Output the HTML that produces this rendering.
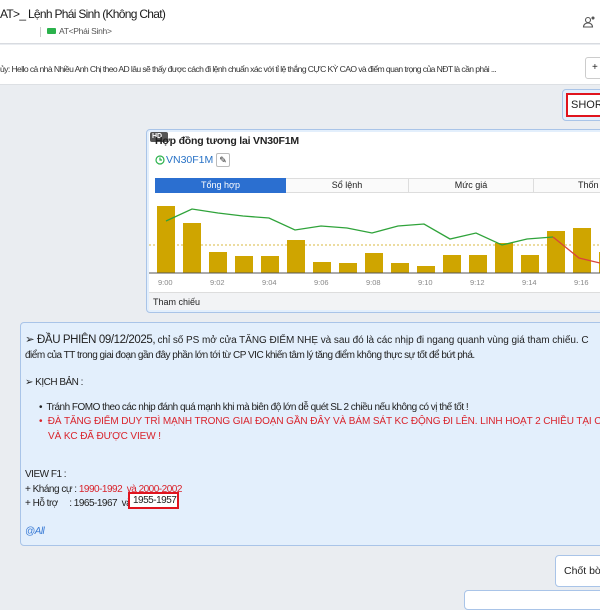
<!DOCTYPE html>
<html><head><meta charset="utf-8"><style>
*{margin:0;padding:0;box-sizing:border-box}
body{width:600px;height:600px;overflow:hidden;background:#eaedf1;font-family:"Liberation Sans","Noto Sans CJK SC",sans-serif;position:relative;color:#222}
.a{position:absolute;white-space:nowrap}
</style></head><body>
<div class="a" style="left:0;top:0;width:600px;height:44px;background:#fff;border-bottom:1px solid #d8dbe0"></div>
<div class="a" style="left:0;top:7px;font-size:12px;letter-spacing:-0.7px;color:#1a1a1a">AT&gt;_ Lệnh Phái Sinh (Không Chat)</div>
<div class="a" style="left:40px;top:27px;width:1px;height:10px;background:#ccc"></div>
<div class="a" style="left:47px;top:28px;width:9px;height:6px;background:#2bb24c;border-radius:1px"></div>
<div class="a" style="left:59px;top:26px;font-size:8.5px;letter-spacing:-0.3px;color:#555">AT&lt;Phái Sinh&gt;</div>
<svg class="a" style="left:582px;top:15px" width="14" height="14" viewBox="0 0 14 14" fill="none" stroke="#555" stroke-width="1.1"><circle cx="6" cy="5" r="2.5"/><path d="M1.5 12c0-2.5 2-4 4.5-4s4.5 1.5 4.5 4z"/><circle cx="11" cy="3" r="1" fill="#555"/></svg>
<div class="a" style="left:0;top:45px;width:600px;height:40px;background:#fff;border-bottom:1px solid #dde0e4"></div>
<div class="a" style="left:0;top:64px;font-size:8.6px;letter-spacing:-0.6px;color:#333">ủy: Hello cả nhà Nhiều Anh Chị theo AD lâu sẽ thấy được cách đi lệnh chuẩn xác với tỉ lệ thắng CỰC KỲ CAO và điểm quan trọng của NĐT là cần phải ...</div>
<div class="a" style="left:585px;top:57px;width:20px;height:22px;border:1px solid #ccc;border-radius:3px;background:#fff;font-size:10px;padding:4px 6px">+</div>
<div class="a" style="left:562px;top:89px;width:50px;height:32px;background:#e3effc;border:1px solid #a9c4e8;border-radius:4px"></div>
<div class="a" style="left:566px;top:93px;width:40px;height:24px;border:2px solid #e0141e;background:#fff;font-size:11px;padding:4px 3px">SHORT</div>
<div class="a" style="left:146px;top:129px;width:460px;height:184px;background:#e3effc;border:1px solid #a9c4e8;border-radius:4px"></div>
<div class="a" style="left:149px;top:132px;width:460px;height:178px;background:#fff"></div>
<div class="a" style="left:150px;top:132px;width:18px;height:10px;background:#555;color:#fff;font-size:7px;font-weight:bold;padding:1px 2px;border-radius:2px">HD</div>
<div class="a" style="left:155px;top:135px;font-size:10.5px;font-weight:bold;letter-spacing:-0.2px">Hợp đồng tương lai VN30F1M</div>
<svg class="a" style="left:155px;top:155px" width="10" height="10" viewBox="0 0 10 10" fill="none" stroke="#2bb24c" stroke-width="1.2"><circle cx="5" cy="5" r="4"/><path d="M5 2.5V5h2"/></svg>
<div class="a" style="left:166px;top:154px;font-size:10.5px;color:#2872c6">VN30F1M</div>
<div class="a" style="left:216px;top:153px;width:14px;height:14px;border:1px solid #bbb;border-radius:2px;font-size:9px;text-align:center;line-height:12px">✎</div>
<div class="a" style="left:155px;top:178px;width:450px;height:15px;border:1px solid #ddd;background:#fafafa"></div>
<div class="a" style="left:155px;top:178px;width:131px;height:15px;background:#2b6fd0;color:#fff;font-size:9px;text-align:center;line-height:15px">Tổng hợp</div>
<div class="a" style="left:286px;top:178px;width:123px;height:15px;font-size:9px;text-align:center;line-height:15px;border-right:1px solid #ddd">Sổ lệnh</div>
<div class="a" style="left:409px;top:178px;width:125px;height:15px;font-size:9px;text-align:center;line-height:15px;border-right:1px solid #ddd">Mức giá</div>
<div class="a" style="left:578px;top:178px;font-size:9px;line-height:15px">Thốn</div>
<svg class="a" style="left:149px;top:195px" width="451" height="95" viewBox="149 195 451 95">
<line x1="149" y1="245" x2="600" y2="245" stroke="#d8b840" stroke-dasharray="2,2"/>
<g fill="#cfa500">
<rect x="157" y="206" width="18" height="67"/><rect x="183" y="223" width="18" height="50"/><rect x="209" y="252" width="18" height="21"/><rect x="235" y="256" width="18" height="17"/><rect x="261" y="256" width="18" height="17"/><rect x="287" y="240" width="18" height="33"/><rect x="313" y="262" width="18" height="11"/><rect x="339" y="263" width="18" height="10"/><rect x="365" y="253" width="18" height="20"/><rect x="391" y="263" width="18" height="10"/><rect x="417" y="266" width="18" height="7"/><rect x="443" y="255" width="18" height="18"/><rect x="469" y="255" width="18" height="18"/><rect x="495" y="243" width="18" height="30"/><rect x="521" y="255" width="18" height="18"/><rect x="547" y="231" width="18" height="42"/><rect x="573" y="228" width="18" height="45"/><rect x="599" y="252" width="18" height="21"/></g>
<line x1="149" y1="273" x2="600" y2="273" stroke="#555"/>
<polyline fill="none" stroke="#2fa33a" stroke-width="1.3" points="166,221 192,209 218,213 243,216 269,218 295,230 321,226 347,228 372,233 398,226 424,224 450,239 476,233 502,245 527,239 553,237"/>
<polyline fill="none" stroke="#d9453a" stroke-width="1.3" points="553,237 579,258 600,263"/>
<g font-size="7.5" fill="#888" font-family="Liberation Sans"><text x="158" y="285">9:00</text><text x="210" y="285">9:02</text><text x="262" y="285">9:04</text><text x="314" y="285">9:06</text><text x="366" y="285">9:08</text><text x="418" y="285">9:10</text><text x="470" y="285">9:12</text><text x="522" y="285">9:14</text><text x="574" y="285">9:16</text></g>
</svg>
<div class="a" style="left:149px;top:292px;width:460px;height:18px;background:#f2f3f5;border-top:1px solid #ddd;font-size:9px;padding:4px 4px">Tham chiếu</div>
<div class="a" style="left:20px;top:322px;width:600px;height:224px;background:#e3effc;border:1px solid #a9c4e8;border-radius:4px"></div>
<div class="a" style="left:25px;top:333px;font-size:10px;letter-spacing:-0.5px;line-height:14.5px">
<div><span style="font-size:11.5px;letter-spacing:-0.4px">➢ ĐẦU PHIÊN 09/12/2025,</span> <span style="letter-spacing:-0.05px">chỉ số PS mở cửa TĂNG ĐIỂM NHẸ và sau đó là các nhịp đi ngang quanh vùng giá tham chiếu. C</span></div>
<div>điểm của TT trong giai đoạn gần đây phần lớn tới từ CP VIC khiến tâm lý tăng điểm không thực sự tốt để bứt phá.</div>
<div style="margin-top:13px">➢ KỊCH BẢN :</div>
<div style="margin-top:10px;padding-left:14px">•&nbsp; Tránh FOMO theo các nhịp đánh quá mạnh khi mà biên độ lớn dễ quét SL 2 chiều nếu không có vị thế tốt !</div>
<div style="padding-left:14px;color:#d9232b;letter-spacing:-0.1px">•&nbsp; ĐÀ TĂNG ĐIỂM DUY TRÌ MẠNH TRONG GIAI ĐOẠN GẦN ĐÂY VÀ BÁM SÁT KC ĐỘNG ĐI LÊN. LINH HOẠT 2 CHIỀU TẠI CÁC</div>
<div style="padding-left:23px;color:#d9232b;letter-spacing:-0.1px">VÀ KC ĐÃ ĐƯỢC VIEW !</div>
<div style="margin-top:24px">VIEW F1 :</div>
<div>+ Kháng cự : <span style="color:#d9232b">1990-1992 &nbsp;và 2000-2002</span></div>
<div>+ Hỗ trợ &nbsp; &nbsp; : 1965-1967 &nbsp;và</div>
<div style="margin-top:13px;color:#3a7bd5;font-style:italic">@All</div>
</div>
<div class="a" style="left:128px;top:492px;width:51px;height:17px;border:2px solid #e0141e;background:#fff;font-size:10px;letter-spacing:-0.5px;padding:1px 3px">1955-1957</div>
<div class="a" style="left:555px;top:555px;width:60px;height:32px;background:#fff;border:1px solid #a9c4e8;border-radius:4px;font-size:10.5px;padding:9px 8px">Chốt bờ</div>
<div class="a" style="left:464px;top:590px;width:150px;height:20px;background:#fff;border:1px solid #a9c4e8;border-radius:4px"></div>
</body></html>
